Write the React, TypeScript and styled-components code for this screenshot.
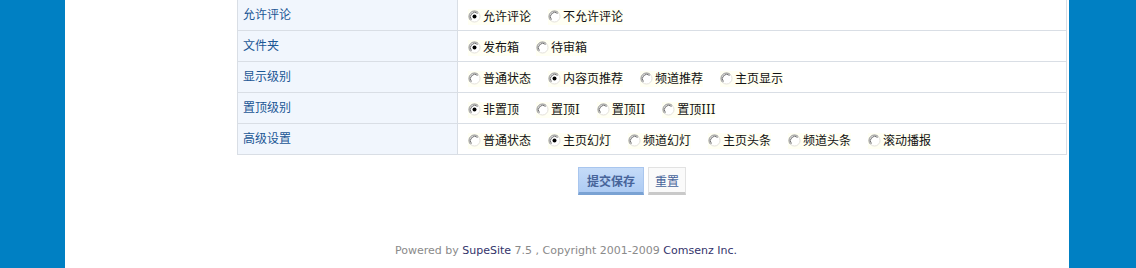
import React from "react";
import styled, { createGlobalStyle } from "styled-components";

const Global = createGlobalStyle`
  html, body { margin: 0; padding: 0; background: #0080c3; }
  body { font-family: "DejaVu Serif", "Noto Sans CJK SC", serif; font-size: 12px; overflow: hidden; }
`;

const Page = styled.div`
  height: 268px;
  padding: 0 67px 0 65px;
  display: flex;
`;

const Panel = styled.div`
  flex: 1;
  background: #fff;
  display: flex;
  flex-direction: column;
  padding: 0 2px 0 172px;
  margin-top: -1px;
`;

const Table = styled.table`
  width: 830px;
  border-collapse: collapse;
  border: 1px solid #d9dee5;
`;

const Row = styled.tr`
  height: 31px;
`;

const LabelCell = styled.th`
  width: 214px;
  border: 1px solid #d9dee5;
  background: #f1f6fd;
  color: #1b5795;
  font-weight: normal;
  text-align: left;
  padding: 0 0 3px 5px;
  font-family: "Noto Sans CJK SC", sans-serif;
  font-size: 12px;
  vertical-align: middle;
`;

const ValueCell = styled.td`
  border: 1px solid #d9dee5;
  padding: 3px 0 0 10px;
  vertical-align: middle;
`;

const Options = styled.div`
  display: flex;
  align-items: center;
  gap: 17px;
`;

const Option = styled.label`
  display: inline-flex;
  align-items: center;
  gap: 2px;
  background: #fffff3;
  color: #111;
  line-height: 16px;
  font-size: 12px;
`;

const Actions = styled.div`
  display: flex;
  gap: 4px;
  margin: 12px 0 0 341px;
`;

const Button = styled.button<{ $primary?: boolean }>`
  height: 28px;
  padding: 0 ${(p) => (p.$primary ? 8 : 6)}px 0;
  font-family: "Noto Sans CJK SC", sans-serif;
  font-size: 12px;
  font-weight: ${(p) => (p.$primary ? "bold" : "normal")};
  color: #47649a;
  border: 1px solid ${(p) => (p.$primary ? "#a9c6ee" : "#e2e2e2")};
  border-bottom: 3px solid ${(p) => (p.$primary ? "#7aa2d3" : "#c9c9c9")};
  background: ${(p) =>
    p.$primary ? "linear-gradient(#c5dbf8, #adcbf3)" : "#fafafa"};
  cursor: pointer;
`;

const Footer = styled.div`
  margin-top: 49px;
  margin-left: -172px;
  text-align: center;
  font-family: "DejaVu Sans", Verdana, sans-serif;
  font-size: 11px;
  color: #8a8a8a;
`;

const Link = styled.span`
  color: #33336b;
`;

const Radio: React.FC<{ checked?: boolean }> = ({ checked }) => (
  <svg width="13" height="13" viewBox="0 0 13 13" style={{ flexShrink: 0 }}>
    <circle cx="6.5" cy="6.5" r="5.5" fill="#fff" />
    <path d="M2.6 10.4 A5.5 5.5 0 0 1 10.4 2.6" fill="none" stroke="#8a8a8a" strokeWidth="1" />
    <path d="M3.4 9.6 A4.4 4.4 0 0 1 9.6 3.4" fill="none" stroke="#4a4a4a" strokeWidth="0.8" />
    <path d="M10.4 2.6 A5.5 5.5 0 0 1 2.6 10.4" fill="none" stroke="#e4e2dc" strokeWidth="1" />
    {checked && <circle cx="6.5" cy="6.5" r="2" fill="#000" />}
  </svg>
);

type Field = { label: string; options: string[]; selected: number };

const fields: Field[] = [
  { label: "允许评论", options: ["允许评论", "不允许评论"], selected: 0 },
  { label: "文件夹", options: ["发布箱", "待审箱"], selected: 0 },
  { label: "显示级别", options: ["普通状态", "内容页推荐", "频道推荐", "主页显示"], selected: 1 },
  { label: "置顶级别", options: ["非置顶", "置顶I", "置顶II", "置顶III"], selected: 0 },
  {
    label: "高级设置",
    options: ["普通状态", "主页幻灯", "频道幻灯", "主页头条", "频道头条", "滚动播报"],
    selected: 1,
  },
];

export default function App() {
  return (
    <>
      <Global />
      <Page>
        <Panel>
          <Table>
            <tbody>
              {fields.map((f) => (
                <Row key={f.label}>
                  <LabelCell>{f.label}</LabelCell>
                  <ValueCell>
                    <Options>
                      {f.options.map((o, i) => (
                        <Option key={o}>
                          <Radio checked={i === f.selected} />
                          {o}
                        </Option>
                      ))}
                    </Options>
                  </ValueCell>
                </Row>
              ))}
            </tbody>
          </Table>
          <Actions>
            <Button $primary>提交保存</Button>
            <Button>重置</Button>
          </Actions>
          <Footer>
            Powered by <Link>SupeSite</Link> 7.5 , Copyright 2001-2009 <Link>Comsenz Inc.</Link>
          </Footer>
        </Panel>
      </Page>
    </>
  );
}
